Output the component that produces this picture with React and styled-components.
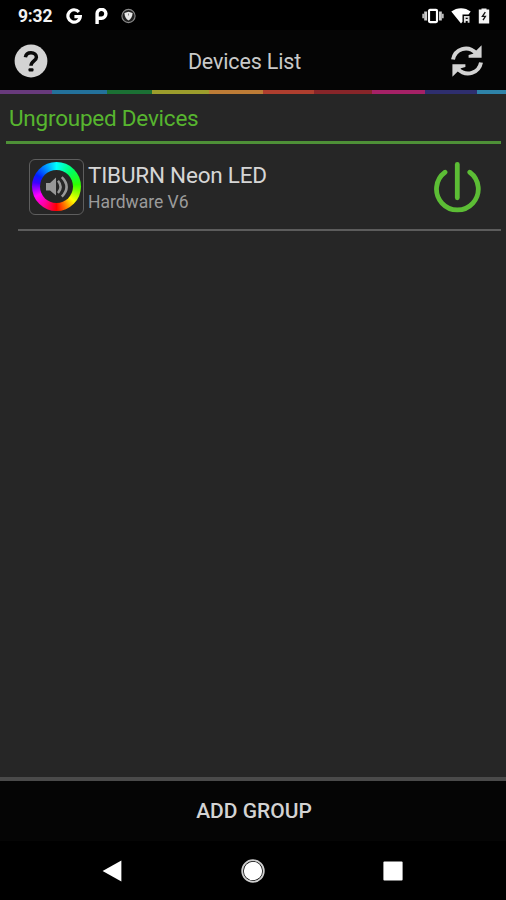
import React from "react";
import styled, { createGlobalStyle } from "styled-components";

// colors
const themeColors = {
    background: "#262626",
    bar: "#050505",
    black: "#000000",
    green: "#4e9037",
    greenText: "#57b52f",
    greenPower: "#5cbd35",
    divider: "#5c5c5c",
    title: "#c9c9c9",
    subtitle: "#9b9b9b",
    icon: "#d3d3d3"
}

const GlobalStyle = createGlobalStyle`
    * {
        box-sizing: border-box;
    }
    body {
        margin: 0;
        background: ${themeColors.black};
        font-family: Roboto, "Liberation Sans", sans-serif;
    }
    svg {
        display: block;
        flex: none;
    }
`

//layout
const Screen = styled.div`
    width: 506px;
    height: 900px;
    display: flex;
    flex-direction: column;
    overflow: hidden;
    background: ${themeColors.background};
`

const StatusBar = styled.div`
    height: 30px;
    flex: none;
    display: flex;
    align-items: center;
    justify-content: space-between;
    padding: 1px 16px 0 18px;
    background: ${themeColors.black};
`

const StatusGroup = styled.div`
    display: flex;
    align-items: center;
    gap: ${({ $gap }) => $gap}px;
`

const Clock = styled.span`
    width: 35px;
    font-size: 17.5px;
    font-weight: 700;
    line-height: 20px;
    letter-spacing: -0.2px;
    color: #f2f2f2;
    white-space: nowrap;
`

const Header = styled.header`
    height: 60px;
    flex: none;
    display: grid;
    grid-template-columns: 34px 1fr 34px;
    align-items: center;
    padding: 2px 22px 0 14px;
    background: ${themeColors.bar};
`

const HeaderTitle = styled.h1`
    margin: 2px 0 0;
    padding-right: 9px;
    text-align: center;
    font-size: 21.5px;
    font-weight: 400;
    line-height: 26px;
    letter-spacing: -0.15px;
    color: ${themeColors.title};
`

const IconButton = styled.button`
    display: flex;
    padding: 0;
    border: 0;
    background: none;
    cursor: pointer;
`

const Rainbow = styled.div`
    height: 4px;
    flex: none;
    background: linear-gradient(
        to right,
        #683a7c 0 52px,
        #23719b 52px 107px,
        #1b7034 107px 152px,
        #9c9d2c 152px 209px,
        #bd7c36 209px 263px,
        #ae3e2e 263px 314px,
        #872529 314px 372px,
        #a52166 372px 425px,
        #2e2e6e 425px 477px,
        #2e83a9 477px
    );
`

//list
const DeviceList = styled.main`
    flex: 1;
    padding: 0 5px 0 6px;
`

const GroupTitle = styled.h2`
    height: 50px;
    margin: 0;
    padding: 10px 0 0 3px;
    border-bottom: 3px solid ${themeColors.green};
    font-size: 22.5px;
    font-weight: 400;
    line-height: 28px;
    letter-spacing: -0.23px;
    color: ${themeColors.greenText};
`

const DeviceRow = styled.div`
    height: 87px;
    margin-left: 12px;
    padding: 0 20px 0 11px;
    display: flex;
    align-items: center;
    border-bottom: 2px solid ${themeColors.divider};
`

const DeviceIcon = styled.div`
    width: 55px;
    height: 56px;
    display: flex;
    align-items: center;
    justify-content: center;
    border: 1px solid #5e5e5e;
    border-radius: 6px;
`

const ColorRing = styled.div`
    width: 49px;
    height: 49px;
    padding: 8px;
    border-radius: 50%;
    background: conic-gradient(
        #00ffff, #00ff60 45deg, #30ff00 85deg, #ffff00 130deg,
        #ff0000 180deg, #ff00a0 215deg, #ff00ff 245deg, #4000ff 280deg,
        #0020ff 300deg, #00ffff 360deg
    );
`

const RingCenter = styled.div`
    width: 33px;
    height: 33px;
    display: flex;
    align-items: center;
    justify-content: center;
    border-radius: 50%;
    background: ${themeColors.background};
`

const DeviceText = styled.div`
    flex: 1;
    display: flex;
    flex-direction: column;
    padding: 3px 0 0 4px;
`

const DeviceName = styled.span`
    font-size: 22.5px;
    line-height: 28px;
    letter-spacing: -0.22px;
    color: #d6d6d6;
`

const DeviceVersion = styled.span`
    font-size: 17.5px;
    line-height: 27px;
    letter-spacing: -0.02px;
    color: ${themeColors.subtitle};
`

//footer
const AddGroup = styled.button`
    height: 64px;
    flex: none;
    padding: 0 0 0 2px;
    border: 0;
    border-top: 4px solid #4a4a4a;
    background: ${themeColors.bar};
    font-family: inherit;
    font-size: 21px;
    font-weight: 500;
    color: ${themeColors.icon};
`

const NavBar = styled.nav`
    height: 59px;
    flex: none;
    display: grid;
    grid-template-columns: 20px 24px 20px;
    justify-content: space-between;
    align-items: center;
    justify-items: center;
    padding: 1px 103px 0 102px;
    background: ${themeColors.black};
`

//icons
const GoogleIcon = () => (
    <svg width="16" height="16" viewBox="0 0 16 16" fill="none" stroke="#fff" strokeWidth="3.2">
        <path d="M12.9 4A6.2 6.2 0 1 0 14.3 8.6H8.4" />
    </svg>
)

const ParkingIcon = () => (
    <svg width="13" height="16" viewBox="0 0 13 16" fill="none" stroke="#fff" strokeWidth="3.4">
        <path d="M2.1 16V6.2A4.4 4.4 0 1 1 6.5 10.2H2.5" />
    </svg>
)

const ShieldIcon = () => (
    <svg width="15" height="16" viewBox="0 0 15 16">
        <circle cx="7.5" cy="8" r="6.6" fill="#202020" stroke="#888" strokeWidth="1.1" />
        <path d="M3.4 5L7.5 3.7 11.6 5C11.4 8.5 10 11 7.5 12.5 5 11 3.6 8.5 3.4 5Z" fill="#e8e8e8" />
        <path d="M7.5 5.5V7.5" stroke="#888" strokeWidth="1" />
    </svg>
)

const VibrateIcon = () => (
    <svg width="22" height="16" viewBox="0 0 22 16" fill="none">
        <path d="M3.6 3.6V12.4M18.4 3.6V12.4" stroke="#ccc" strokeWidth="2.8" />
        <path d="M1.3 5.8V10.2M20.7 5.8V10.2" stroke="#bbb" strokeWidth="2" />
        <rect x="7" y="1.9" width="8" height="12.2" rx="1" stroke="#fff" strokeWidth="2.2" />
    </svg>
)

const WifiIcon = () => (
    <svg width="20" height="16" viewBox="0 0 20 16">
        <path d="M0.3 3.5C6-1 14-1 19.7 3.5L17.5 6.6H11.5V13.8L10 15.5Z" fill="#fff" />
        <path d="M13.8 14.8V8.8H17.6V14.8M14 12H18" fill="none" stroke="#ddd" strokeWidth="1.8" />
    </svg>
)

const BatteryIcon = () => (
    <svg width="12" height="16" viewBox="0 0 12 16">
        <path d="M0.8 1.6H3.5V0.5H8.5V1.6H11.2V15.6H0.8Z" fill="#f4f4f4" />
        <path d="M7.3 4.2L4.4 8.4H7.4L5 12.2" fill="none" stroke="#111" strokeWidth="1.3" />
    </svg>
)

const HelpIcon = () => (
    <svg width="34" height="34" viewBox="0 0 34 34">
        <circle cx="17" cy="17" r="16.4" fill={themeColors.icon} />
        <path d="M11.4 13.2C12 9.8 14 8.8 17 8.8C20.4 8.8 22.4 10.6 22.4 13.2C22.4 16.8 17 17 17 21.8" fill="none" stroke="#0a0a0a" strokeWidth="3.5" />
        <rect x="14.5" y="24.2" width="5" height="3.2" rx="1" fill="#0a0a0a" />
    </svg>
)

const RefreshIcon = () => (
    <svg width="34" height="34" viewBox="0 0 34 34">
        <g fill="none" stroke={themeColors.icon} strokeWidth="4">
            <path d="M3 15.5C5 5 17.5 0.2 26.5 9.4" />
            <path d="M31 18.5C29 29 16.5 33.8 7.5 24.6" />
        </g>
        <path d="M31.6 1.2V13.8H18.6V11L23 9.8Z" fill={themeColors.icon} />
        <path d="M2.4 32.8V20.2H15.4V23L11 24.2Z" fill={themeColors.icon} />
    </svg>
)

const SpeakerIcon = () => (
    <svg width="24" height="24" viewBox="0 0 24 24">
        <path d="M1 8H5L11 2.6V20.6L5 15.6H1Z" fill="#989898" />
        <g fill="none" stroke="#989898" strokeWidth="2.5">
            <path d="M13 5.8Q18.2 12 13 18" />
            <path d="M16.8 2.2Q26.4 12 16.8 21.6" />
        </g>
    </svg>
)

const PowerIcon = () => (
    <svg width="48" height="52" viewBox="0 0 48 52" fill="none" stroke={themeColors.greenPower} strokeWidth="4.8" strokeLinecap="round">
        <path d="M24.3 3.4V36.8" />
        <path d="M12 11.2A20.9 20.9 0 1 0 36.8 11.2" />
    </svg>
)

const BackIcon = () => (
    <svg width="20" height="22" viewBox="0 0 20 22">
        <path d="M0.6 11L19.4 0.5V21.5Z" fill="#fff" />
    </svg>
)

const HomeIcon = () => (
    <svg width="24" height="24" viewBox="0 0 24 24">
        <circle cx="12" cy="12" r="9.2" fill="#fff" />
        <circle cx="12" cy="12" r="10.8" fill="none" stroke="#d0d0d0" strokeWidth="1.8" />
    </svg>
)

const RecentIcon = () => (
    <svg width="20" height="20" viewBox="0 0 20 20">
        <rect x="0.4" y="0.4" width="19.2" height="19.2" rx="1" fill="#fff" />
    </svg>
)

export default function App() {
    return (
        <>
            <GlobalStyle />
            <Screen>
                <StatusBar>
                    <StatusGroup $gap={13}>
                        <Clock>9:32</Clock>
                        <GoogleIcon />
                        <ParkingIcon />
                        <ShieldIcon />
                    </StatusGroup>
                    <StatusGroup $gap={7}>
                        <VibrateIcon />
                        <WifiIcon />
                        <BatteryIcon />
                    </StatusGroup>
                </StatusBar>
                <Header>
                    <IconButton aria-label="Help"><HelpIcon /></IconButton>
                    <HeaderTitle>Devices List</HeaderTitle>
                    <IconButton aria-label="Refresh"><RefreshIcon /></IconButton>
                </Header>
                <Rainbow />
                <DeviceList>
                    <GroupTitle>Ungrouped Devices</GroupTitle>
                    <DeviceRow>
                        <DeviceIcon>
                            <ColorRing>
                                <RingCenter><SpeakerIcon /></RingCenter>
                            </ColorRing>
                        </DeviceIcon>
                        <DeviceText>
                            <DeviceName>TIBURN Neon LED</DeviceName>
                            <DeviceVersion>Hardware V6</DeviceVersion>
                        </DeviceText>
                        <IconButton aria-label="Power"><PowerIcon /></IconButton>
                    </DeviceRow>
                </DeviceList>
                <AddGroup>ADD GROUP</AddGroup>
                <NavBar>
                    <BackIcon />
                    <HomeIcon />
                    <RecentIcon />
                </NavBar>
            </Screen>
        </>
    )
}
